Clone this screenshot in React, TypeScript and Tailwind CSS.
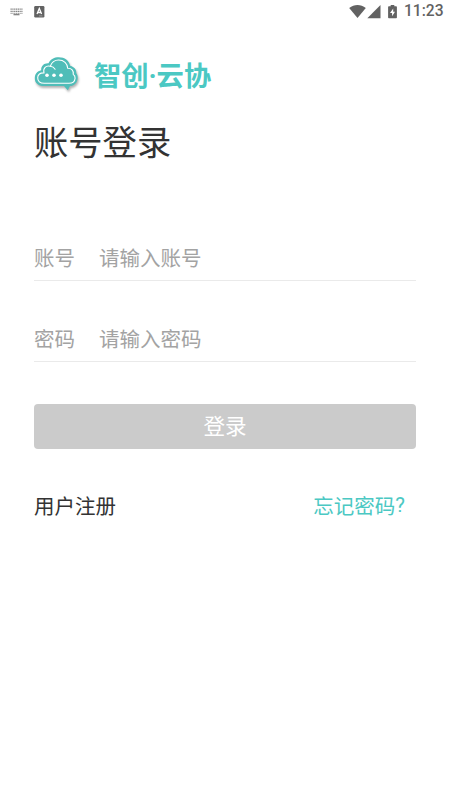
function StatusBar() {
  return (
    <div className="flex h-[23px] items-center justify-between pr-[7px] pl-[10px] text-[#626262]">
      <div className="flex items-center gap-[11px]">
        <svg width="13" height="8" viewBox="0 0 13 8" className="text-[#858585]">
          <path d="M0.5 1.2h12M0.5 3.4h12" stroke="currentColor" strokeWidth="1.3" strokeDasharray="1.3 0.5" />
          <path d="M0.5 5.3h12" stroke="currentColor" strokeWidth="0.9" strokeDasharray="1.3 0.5" />
          <path d="M3.5 6.6h6" stroke="currentColor" strokeWidth="1.4" />
        </svg>
        <svg width="11" height="12" viewBox="0 0 11 12">
          <rect x="0.2" y="0" width="10.2" height="11.4" rx="1.2" fill="currentColor" />
          <path d="M3 8 5.3 2.5 7.6 8M3.8 6.5H6.9" fill="none" stroke="white" strokeWidth="1.3" />
          <path d="M5 9.9h3.5" stroke="white" strokeWidth="0.6" opacity="0.6" />
        </svg>
      </div>
      <div className="flex items-center">
        <svg width="17" height="14" viewBox="0 0 17 14">
          <path d="M0.2 3C5.2 -0.9 11.8 -0.9 16.8 3L8.5 13Z" fill="currentColor" />
        </svg>
        <svg width="14" height="14" viewBox="0 0 14 14" className="ml-px">
          <path d="M13.5 0V13.2H0.3Z" fill="currentColor" />
        </svg>
        <svg width="9" height="14" viewBox="0 0 9 14" className="ml-[7px]">
          <path d="M2.7 0h3.6v1.3h1.8q0.8 0 0.8 0.8v10.4q0 0.8-0.8 0.8H0.9q-0.8 0-0.8-0.8V2.1q0-0.8 0.8-0.8h1.8z" fill="currentColor" />
          <path d="M5.2 3.4 2 8h2.1v3.2L7 6.7H5.2z" fill="white" />
        </svg>
        <span className="ml-[7px] w-[39px] pt-px font-[Roboto] text-[15.6px] leading-none font-medium whitespace-nowrap">11:23</span>
      </div>
    </div>
  );
}

function CloudLogo() {
  return (
    <svg width="48" height="36" viewBox="0 0 48 36" className="drop-shadow-[1px_2px_1px_rgba(0,0,0,0.3)]">
      <path
        d="M10 29C4 29 0.8 25.8 0.8 21.2C0.8 17 3.2 14 7.2 13.2C7 8.8 10 6 14.5 6.3C16.6 2.2 20.2 0.3 24.8 0.3C30.8 0.3 35 3.6 36.2 8.8C40.4 10 42.5 12.5 42.3 16.2C43.4 17.6 43.8 19.2 43.7 21C43.5 25.8 40 29 36 29.1L33.8 33.2L30 29Z"
        fill="#50bdb8"
      />
      <path
        d="M10.3 26.3C6.2 26.3 3.7 24.3 3.7 20.8C3.7 17.5 6.2 15.7 10 15.9C8.8 11.2 12 8.2 16.3 9.3C17.7 5.2 20.5 3 24.6 3C29.9 3 33.5 6.5 33.7 11.3C37.6 11.2 39.8 13.4 39.2 17.4C40.7 18.3 41.2 19.8 41.1 21.3C40.8 24.6 38.6 26.3 35 26.3Z"
        fill="none"
        stroke="white"
        strokeWidth="1.1"
        strokeLinejoin="round"
      />
      <path d="M16.3 9.3C18.5 9.6 20.1 10.6 21.1 12.2" fill="none" stroke="white" strokeWidth="1.1" strokeLinecap="round" />
      <circle cx="13" cy="18.2" r="1.8" fill="white" />
      <circle cx="20" cy="18.2" r="1.8" fill="white" />
      <circle cx="27" cy="18.2" r="1.8" fill="white" />
    </svg>
  );
}

interface FieldProps {
  label: string;
  placeholder: string;
  type?: string;
}

function Field({ label, placeholder, type = "text" }: FieldProps) {
  return (
    <label className="flex h-[45px] items-center border-b border-[#eaeaea] pb-[2px] text-[20.5px] text-[#a3a3a3]">
      <span className="w-[65px] shrink-0">{label}</span>
      <input
        type={type}
        placeholder={placeholder}
        className="min-w-0 flex-1 bg-transparent outline-none placeholder:text-[#a3a3a3]"
      />
    </label>
  );
}

export default function App() {
  return (
    <div className="h-[800px] w-[450px] overflow-hidden bg-white font-['Noto_Sans_CJK_SC',sans-serif] text-[#333]">
      <StatusBar />
      <main className="px-[34px] pt-[33px]">
        <div className="flex h-[38px] items-center gap-[12px]">
          <CloudLogo />
          <span className="flex text-[27.3px] leading-[38px] font-bold whitespace-nowrap text-[#4bc8c3]">
            智创
            <span className="w-[8px] pt-[2px] text-center font-[Roboto]">·</span>
            云协
          </span>
        </div>
        <h1 className="mt-[21px] text-[34.3px] leading-[50px]">账号登录</h1>
        <form className="mt-[71px]">
          <Field label="账号" placeholder="请输入账号" />
          <div className="h-[36px]" />
          <Field label="密码" placeholder="请输入密码" type="password" />
          <button
            type="button"
            className="mt-[42px] flex h-[45px] w-full items-center justify-center rounded-[4px] bg-[#cbcbcb] pb-[2px] text-[21.6px] text-white"
          >
            登录
          </button>
        </form>
        <div className="mt-[41px] flex h-[30px] items-center justify-between pr-[11px] text-[20.5px] leading-[30px]">
          <a>用户注册</a>
          <a className="flex text-[#4bc8c3]">
            忘记密码<span className="font-[Roboto]">?</span>
          </a>
        </div>
      </main>
    </div>
  );
}
